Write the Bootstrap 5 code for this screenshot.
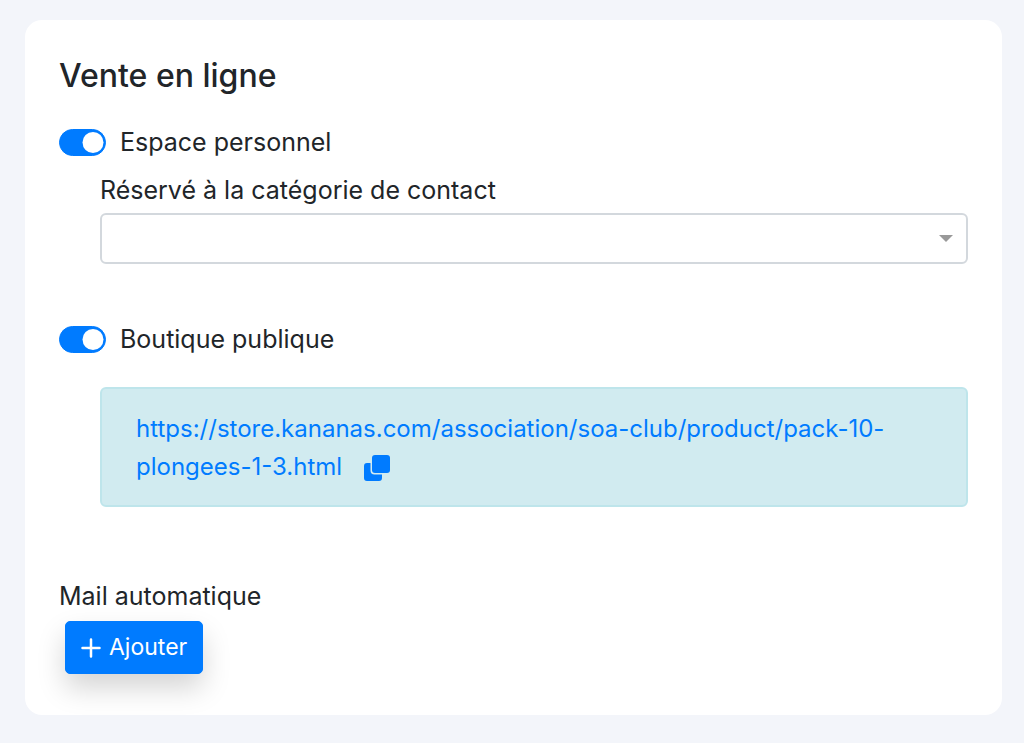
<!DOCTYPE html>
<html lang="fr">
<head>
<meta charset="utf-8">
<meta name="viewport" content="width=device-width, initial-scale=1">
<title>Vente en ligne</title>
<link href="https://cdn.jsdelivr.net/npm/bootstrap@5.3.0/dist/css/bootstrap.min.css" rel="stylesheet">
<style>
  :root { --accent: #007bff; }
  body { background: #f3f5fa; color: #212529; font-family: Inter, "Liberation Sans", sans-serif; font-size: 25px; line-height: 38px; }
  .page { padding: 20px 22px 29px 25px; }
  .sale-card { border: 0; border-radius: 17px; color: #212529; }
  .sale-card > .card-body { padding: 36px 34px 41px; }
  .sale-title { font-size: 32px; font-weight: 500; line-height: 40px; margin-bottom: 27px; }
  .toggle { display: flex; align-items: center; gap: 14px; min-height: 38px; margin: 0; padding: 0; }
  .form-switch.toggle .form-check-input { float: none; flex: none; width: 47px; height: 27px; margin: 0; border-radius: 14px; }
  .form-switch.toggle .form-check-input:checked { background-color: var(--accent); border-color: var(--accent); background-size: 28px 28px; background-position: right -2px center; }
  .indent { margin-left: 41px; }
  .category-field { margin-top: 10px; }
  .category { height: 51px; border: 2px solid #d3d8dd; border-radius: 6px; background-size: 14px 7px; background-position: right 13px center;
    background-image: url("data:image/svg+xml,%3csvg xmlns='http://www.w3.org/2000/svg' viewBox='0 0 14 7'%3e%3cpath fill='%23999' d='M0 0h14L7 7z'/%3e%3c/svg%3e"); }
  .shop-link { margin-top: 29px; padding: 21px 34px 19px; background: #d1ebf0; border: 2px solid #bee5eb; border-radius: 6px; font-size: 24px; }
  .shop-link a { color: var(--accent); }
  .copy-btn { color: var(--accent); line-height: 26px; margin-left: 15px; }
  .mail { margin-top: 70px; }
  .add-btn { --bs-btn-bg: var(--accent); --bs-btn-border-color: var(--accent); height: 53px; padding: 0 15px; margin: 6px 0 0 6px; border-radius: 5px; font-size: 23px; gap: 8px; box-shadow: 0 14px 28px rgba(0,0,0,.17); }
</style>
</head>
<body>
<main class="page">
  <section class="card sale-card">
    <div class="card-body">
      <h1 class="sale-title">Vente en ligne</h1>

      <div class="form-check form-switch toggle">
        <input class="form-check-input" type="checkbox" role="switch" id="espace" checked>
        <label class="form-check-label" for="espace">Espace personnel</label>
      </div>
      <div class="indent category-field">
        <label class="d-block mb-1" for="categorie">Réservé à la catégorie de contact</label>
        <select class="form-select category" id="categorie"><option value="" selected></option></select>
      </div>

      <div class="form-check form-switch toggle mt-5 pt-2">
        <input class="form-check-input" type="checkbox" role="switch" id="boutique" checked>
        <label class="form-check-label" for="boutique">Boutique publique</label>
      </div>
      <div class="indent shop-link">
        <a class="text-decoration-none" href="https://store.kananas.com/association/soa-club/product/pack-10-plongees-1-3.html">https://store.kananas.com/association/soa-club/product/pack-10-plongees-1-3.html</a>
        <button type="button" class="btn border-0 p-0 copy-btn" aria-label="Copier le lien">
          <svg class="d-block" width="26" height="26" viewBox="0 0 26 26" fill="currentColor" aria-hidden="true"><rect x="8" y="0" width="18" height="18" rx="3"/><path d="M3 8h3.500v7.500a4 4 0 0 0 4 4H18V23a3 3 0 0 1-3 3H3a3 3 0 0 1-3-3V11a3 3 0 0 1 3-3z"/></svg>
        </button>
      </div>

      <div class="mail">
        <div>Mail automatique</div>
        <button type="button" class="btn btn-primary add-btn d-flex align-items-center">
          <svg width="20" height="20" viewBox="0 0 20 20" fill="none" stroke="currentColor" stroke-width="2.500" stroke-linecap="round" aria-hidden="true"><path d="M10 1.500v17M1.500 10h17"/></svg>
          Ajouter
        </button>
      </div>
    </div>
  </section>
</main>
<script src="https://cdn.jsdelivr.net/npm/bootstrap@5.3.0/dist/js/bootstrap.bundle.min.js"></script>
</body>
</html>
